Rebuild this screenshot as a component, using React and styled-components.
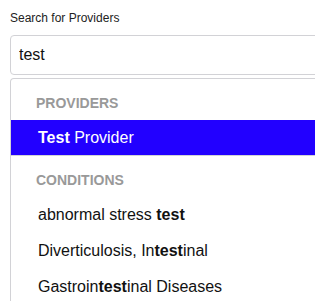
import React from "react";
import styled, { createGlobalStyle } from "styled-components";

const GlobalStyle = createGlobalStyle`
  body {
    margin: 0;
    background: #fff;
    font-family: "Liberation Sans", Arial, Helvetica, sans-serif;
  }
`;

const Frame = styled.div`
  width: 305px;
  padding: 11px 0 0 10px;
  overflow: hidden;
`;

const Label = styled.label`
  display: block;
  font-size: 12px;
  line-height: 14px;
  color: #222;
  margin-bottom: 10px;
`;

const Input = styled.input`
  display: block;
  box-sizing: border-box;
  width: calc(100% + 10px);
  height: 40px;
  padding: 0 8px;
  border: 1px solid #d2d2d6;
  border-radius: 4px;
  font-family: inherit;
  font-size: 16px;
  color: #111;
  outline: none;
`;

const Dropdown = styled.div`
  box-sizing: border-box;
  width: calc(100% + 10px);
  margin-top: 3px;
  border: 1px solid #d2d2d6;
  border-bottom: none;
  border-radius: 4px 4px 0 0;
  height: 230px;
  overflow: hidden;
`;

const Section = styled.div`
  border-bottom: ${(p) => (p.$divider ? "1px solid #d2d2d6" : "none")};
`;

const Header = styled.div`
  padding: 14px 25px 7px;
  font-size: 14px;
  line-height: 20px;
  font-weight: 700;
  color: #999;
  text-transform: uppercase;
`;

const Option = styled.div`
  height: ${(p) => (p.$active ? "35px" : "36px")};
  line-height: ${(p) => (p.$active ? "35px" : "36px")};
  padding-left: 27px;
  font-size: 16px;
  white-space: nowrap;
  color: ${(p) => (p.$active ? "#fff" : "#111")};
  background: ${(p) => (p.$active ? "#2200ff" : "transparent")};

  b {
    font-weight: 700;
  }
`;

const Highlight = ({ text, query }) => {
  const i = text.toLowerCase().indexOf(query.toLowerCase());
  if (i < 0) return text;
  return (
    <>
      {text.slice(0, i)}
      <b>{text.slice(i, i + query.length)}</b>
      {text.slice(i + query.length)}
    </>
  );
};

const query = "test";
const conditions = [
  "abnormal stress test",
  "Diverticulosis, Intestinal",
  "Gastrointestinal Diseases",
];

export default function App() {
  return (
    <>
      <GlobalStyle />
      <Frame>
        <Label>Search for Providers</Label>
        <Input defaultValue={query} />
        <Dropdown>
          <Section $divider>
            <Header>Providers</Header>
            <Option $active>
              <Highlight text="Test Provider" query={query} />
            </Option>
          </Section>
          <Section>
            <Header>Conditions</Header>
            {conditions.map((c) => (
              <Option key={c}>
                <Highlight text={c} query={query} />
              </Option>
            ))}
          </Section>
        </Dropdown>
      </Frame>
    </>
  );
}
